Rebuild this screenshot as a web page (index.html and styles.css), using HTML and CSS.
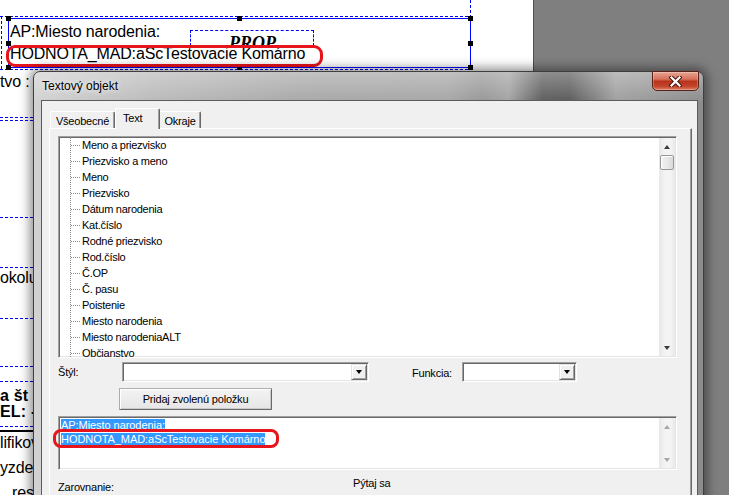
FILE: index.html
```html
<!DOCTYPE html>
<html lang="sk">
<head>
<meta charset="utf-8">
<title>Textový objekt</title>
<link rel="stylesheet" href="styles.css">
</head>
<body>
<div class="screen">
  <div class="canvas">
    <div class="dash-h top-rule"></div>
    <div class="dash-v top-vert"></div>
    <div class="dash-v left-vert"></div>
    <div class="selbox"></div>
    <div class="dash-h sel-under"></div>
    <div class="handle h-tl"></div>
    <div class="handle h-tm"></div>
    <div class="handle h-tr"></div>
    <div class="handle h-ml"></div>
    <div class="handle h-mr"></div>
    <div class="handle h-bl"></div>
    <div class="handle h-bm"></div>
    <div class="handle h-br"></div>
    <div class="prop"><span class="prop-text">PROP</span></div>
    <div class="cv-text t-ap">AP:Miesto narodenia:</div>
    <div class="cv-text t-hod">HODNOTA_MAD:aScTestovacie Komárno</div>
    <div class="ring ring-canvas"></div>

    <div class="cv-text t-tvo">tvo :</div>
    <div class="dash-h side d117"></div>
    <div class="dash-h side d120"></div>
    <div class="dash-h side d217"></div>
    <div class="dash-h side d267"></div>
    <div class="cv-text t-okolu">okolu</div>
    <div class="dash-h side d318"></div>
    <div class="dash-h side d366"></div>
    <div class="dash-h side d381"></div>
    <div class="cv-text bold t-ast">a št</div>
    <div class="cv-text bold t-el">EL: -</div>
    <div class="dash-h side d426"></div>
    <div class="solid-rule"></div>
    <div class="cv-text t-lif">lifikov</div>
    <div class="cv-text t-yz">yzdel</div>
    <div class="cv-text t-reso">reso</div>
  </div>
  <div class="backdrop"></div>

  <div class="dialog">
    <div class="titlebar">
      <span class="title">Textový objekt</span>
      <div class="close">
        <svg width="13" height="11" viewBox="0 0 13 11">
          <path d="M2.5 1.5 L10.5 9.5 M10.5 1.5 L2.5 9.5" stroke="#4b1710" stroke-width="4.2" stroke-linecap="square" fill="none"/>
          <path d="M2.5 1.5 L10.5 9.5 M10.5 1.5 L2.5 9.5" stroke="#ffffff" stroke-width="2.2" stroke-linecap="square" fill="none"/>
        </svg>
      </div>
    </div>
    <div class="client">
      <div class="tabs">
        <div class="tab tab-gen">Všeobecné</div>
        <div class="tab tab-text active">Text</div>
        <div class="tab tab-okr">Okraje</div>
      </div>
      <div class="panel">
        <div class="treebox sunken">
          <ul class="tree">
            <li>Meno a priezvisko</li>
            <li>Priezvisko a meno</li>
            <li>Meno</li>
            <li>Priezvisko</li>
            <li>Dátum narodenia</li>
            <li>Kat.číslo</li>
            <li>Rodné priezvisko</li>
            <li>Rod.číslo</li>
            <li>Č.OP</li>
            <li>Č. pasu</li>
            <li>Poistenie</li>
            <li>Miesto narodenia</li>
            <li>Miesto narodeniaALT</li>
            <li>Občianstvo</li>
          </ul>
          <div class="vscroll">
            <div class="sb-btn"><span class="tri-up"></span></div>
            <div class="thumb"></div>
            <div class="sb-track"></div>
            <div class="sb-btn"><span class="tri-down"></span></div>
          </div>
        </div>

        <div class="combo-row">
          <span class="lbl lbl-styl">Štýl:</span>
          <div class="combo sunken combo-styl"><div class="drop"><span class="tri-down black"></span></div></div>
          <span class="lbl lbl-fn">Funkcia:</span>
          <div class="combo sunken combo-fn"><div class="drop"><span class="tri-down black"></span></div></div>
        </div>

        <div class="btn-row">
          <button class="btn" type="button">Pridaj zvolenú položku</button>
        </div>

        <div class="memo sunken">
          <div class="memo-text">
            <div class="mline"><span class="hl">AP:Miesto narodenia:</span></div>
            <div class="mline"><span class="hl">HODNOTA_MAD:aScTestovacie Komárno</span></div>
          </div>
          <div class="vscroll disabled">
            <div class="sb-btn"><span class="tri-up"></span></div>
            <div class="sb-track"></div>
            <div class="sb-btn"><span class="tri-down"></span></div>
          </div>
          <div class="ring ring-memo"></div>
        </div>

        <div class="bottom-row">
          <span class="lbl lbl-zar">Zarovnanie:</span>
          <span class="lbl lbl-pyt">Pýtaj sa</span>
        </div>
      </div>
    </div>
  </div>
</div>
</body>
</html>
```

FILE: styles.css
```css
* { box-sizing: border-box; }
html, body { margin: 0; padding: 0; }
body {
  width: 729px;
  height: 495px;
  overflow: hidden;
  background: #7f7f7f;
  font-family: "Liberation Sans", Arial, sans-serif;
  color: #000;
}
.screen {
  position: relative;
  display: flex;
  width: 729px;
  height: 495px;
  overflow: hidden;
}

/* ---------- design canvas ---------- */
.canvas {
  position: relative;
  flex: none;
  width: 533px;
  height: 495px;
  background: #fff;
  overflow: hidden;
}
.backdrop {
  flex: 1;
  background: #7f7f7f;
  border-left: 1px solid #4f4f4f;
}
.dash-h {
  position: absolute;
  height: 1px;
  background: repeating-linear-gradient(to right, #0000ff 0 3px, transparent 3px 5px);
}
.dash-v {
  position: absolute;
  width: 1px;
  background: repeating-linear-gradient(to bottom, #0000ff 0 3px, transparent 3px 5px);
}
.top-rule { top: 16px; left: 0; width: 471px; }
.top-vert { top: 0; left: 470px; height: 16px; }
.left-vert { top: 16px; left: 1px; height: 54px; }
.sel-under { top: 69px; left: 0; width: 471px; }
.selbox {
  position: absolute;
  left: 8px;
  top: 18px;
  width: 463px;
  height: 50px;
  border: 1px solid #0000ff;
}
.handle {
  position: absolute;
  width: 5px;
  height: 5px;
  background: #000;
}
.h-tl { left: 6px; top: 16px; }
.h-tm { left: 237px; top: 16px; }
.h-tr { left: 468px; top: 16px; }
.h-ml { left: 6px; top: 41px; }
.h-mr { left: 468px; top: 41px; }
.h-bl { left: 6px; top: 65px; }
.h-bm { left: 237px; top: 65px; }
.h-br { left: 468px; top: 65px; }

.prop {
  position: absolute;
  left: 190px;
  top: 30px;
  width: 124px;
  height: 16px;
  border: 1px dashed #0000ff;
  border-bottom: none;
  overflow: hidden;
  padding: 3px 0 0 38px;
}
.prop-text {
  display: block;
  font-family: "Liberation Serif", "Times New Roman", serif;
  font-weight: bold;
  font-style: italic;
  font-size: 18px;
  line-height: 18px;
  color: #000;
}
.cv-text {
  position: absolute;
  font-size: 16px;
  line-height: 18px;
  letter-spacing: -0.15px;
  white-space: nowrap;
  color: #000;
}
.cv-text.bold {
  font-weight: bold;
  font-size: 16px;
  line-height: 16px;
  letter-spacing: 0.2px;
}
.t-ap { left: 10px; top: 23px; }
.t-hod { left: 10px; top: 45px; }
.t-tvo { left: 0; top: 73px; }
.t-okolu { left: 0; top: 269px; }
.t-ast { left: 0; top: 388px; }
.t-el { left: 0; top: 404px; }
.t-lif { left: 0; top: 434px; }
.t-yz { left: 0; top: 459px; }
.t-reso { left: 12px; top: 484px; }
.side { left: 0; width: 60px; }
.d117 { top: 117px; }
.d120 { top: 120px; }
.d217 { top: 217px; }
.d267 { top: 267px; }
.d318 { top: 318px; }
.d366 { top: 366px; }
.d381 { top: 381px; }
.d426 { top: 426px; }
.solid-rule {
  position: absolute;
  left: 0;
  top: 430px;
  width: 60px;
  height: 2px;
  background: #000;
}

.ring {
  position: absolute;
  border: 3px solid #e8141c;
  border-radius: 9px;
}
.ring-canvas { left: 6px; top: 45px; width: 317px; height: 22px; }

/* ---------- dialog window ---------- */
.dialog {
  position: absolute;
  left: 33px;
  top: 71px;
  width: 671px;
  height: 440px;
  border: 1px solid #3e3e3e;
  border-radius: 7px 7px 0 0;
  background:
    linear-gradient(to bottom, rgba(255,255,255,0.3), rgba(255,255,255,0) 30px),
    linear-gradient(to right, #d2d2d2 0%, #bababa 18%, #a8a8a8 40%, #a6a6a6 62%, #989898 67%, #a3a3a3 71%, #5e5e5e 76%, #5c5c5c 80%, #a0a0a0 87%, #8c8c8c 100%);
  box-shadow: 0 0 11px 3px rgba(0,0,0,0.45);
  padding: 0 5px 0 7px;
  display: flex;
  flex-direction: column;
}
.titlebar {
  height: 28px;
  flex: none;
  display: flex;
  align-items: center;
  justify-content: space-between;
}
.title {
  padding-left: 1px;
  font-size: 12px;
  color: #000;
  text-shadow: 0 0 5px rgba(255,255,255,0.85), 0 0 9px rgba(255,255,255,0.6);
}
.close {
  align-self: flex-start;
  margin-top: -1px;
  margin-right: -1px;
  width: 47px;
  height: 20px;
  border: 1px solid #5a2118;
  border-radius: 0 0 5px 5px;
  background: linear-gradient(to bottom, #e7a696 0%, #d6705a 40%, #b8321b 52%, #c4452b 80%, #dc8266 100%);
  box-shadow: inset 0 0 0 1px rgba(255,255,255,0.25);
  display: flex;
  align-items: center;
  justify-content: center;
}
.close svg { display: block; }

.client {
  flex: 1;
  background: #f0f0f0;
  border: 1px solid #5c5c5c;
  border-bottom: none;
  padding: 7px 5px 0 7px;
  display: flex;
  flex-direction: column;
  font-size: 11px;
  letter-spacing: -0.2px;
}
.tabs {
  height: 20px;
  flex: none;
  display: flex;
  align-items: flex-end;
  padding-left: 1px;
}
.tab {
  height: 17px;
  background: #f0f0f0;
  border: 1px solid;
  border-color: #fff #696969 transparent #fff;
  border-bottom: none;
  border-radius: 2px 2px 0 0;
  box-shadow: inset -1px 0 0 #a0a0a0;
  display: flex;
  align-items: center;
  justify-content: center;
  padding-top: 1px;
}
.tab-gen { width: 65px; }
.tab-text { width: 45px; }
.tab-okr { width: 42px; margin-left: -1px; }
.tab.active {
  height: 21px;
  margin-bottom: -1px;
  position: relative;
  z-index: 1;
  justify-content: flex-start;
  padding: 0 0 2px 7px;
}
.panel {
  flex: 1;
  background: #f0f0f0;
  border-top: 1px solid #fff;
  border-left: 1px solid #fff;
  border-right: 1px solid #696969;
  box-shadow: inset -1px 0 0 #a0a0a0;
  padding: 7px 0 0 8px;
  display: flex;
  flex-direction: column;
}
.sunken {
  background: #fff;
  border: 1px solid;
  border-color: #a0a0a0 #fff #fff #a0a0a0;
  box-shadow: inset 1px 1px 0 #696969, inset -1px -1px 0 #e3e3e3;
  padding: 1px;
}
.treebox {
  width: 619px;
  height: 222px;
  flex: none;
  display: flex;
  overflow: hidden;
}
.tree {
  flex: 1;
  list-style: none;
  margin: -1px 0 0 10px;
  padding: 0;
  border-left: 1px dotted #8a8a8a;
  align-self: flex-start;
  min-height: 232px;
  letter-spacing: -0.27px;
}
.tree li {
  position: relative;
  height: 16px;
  line-height: 16px;
  padding-left: 11px;
  white-space: nowrap;
}
.tree li::before {
  content: "";
  position: absolute;
  left: 0;
  top: 8px;
  width: 9px;
  border-top: 1px dotted #8a8a8a;
}

.vscroll {
  width: 16px;
  flex: none;
  display: flex;
  flex-direction: column;
  background: linear-gradient(to right, #e8e8e8, #f4f4f4 40%, #f4f4f4 70%, #e9e9e9);
}
.sb-btn {
  height: 17px;
  flex: none;
  display: flex;
  align-items: center;
  justify-content: center;
}
.sb-track { flex: 1; }
.thumb {
  height: 15px;
  flex: none;
  margin: 0 1px;
  border: 1px solid #979797;
  border-radius: 2px;
  background: linear-gradient(to right, #f3f3f3, #e8e8e8 50%, #d9d9d9);
  box-shadow: inset 1px 1px 0 #fff;
}
.tri-up, .tri-down {
  width: 0;
  height: 0;
  border-left: 3.5px solid transparent;
  border-right: 3.5px solid transparent;
}
.tri-up { border-bottom: 4px solid #3c3c3c; }
.tri-down { border-top: 4px solid #3c3c3c; }
.disabled .tri-up { border-bottom-color: #a7a7a7; }
.disabled .tri-down { border-top-color: #a7a7a7; }
.tri-down.black { border-top-color: #000; }

.combo-row {
  margin-top: 4px;
  height: 20px;
  flex: none;
  display: flex;
  align-items: center;
}
.lbl { line-height: 16px; }
.lbl-styl { width: 64px; }
.lbl-fn { width: 50px; margin-left: 43px; padding-top: 2px; }
.combo {
  height: 20px;
  display: flex;
  justify-content: flex-end;
}
.combo-styl { width: 247px; }
.combo-fn { width: 115px; }
.drop {
  width: 16px;
  height: 16px;
  background: #f0f0f0;
  border: 1px solid;
  border-color: #e3e3e3 #696969 #696969 #e3e3e3;
  box-shadow: inset 1px 1px 0 #fff, inset -1px -1px 0 #a0a0a0;
  display: flex;
  align-items: center;
  justify-content: center;
}

.btn-row {
  margin-top: 6px;
  flex: none;
  display: flex;
}
.btn {
  margin: 0 0 0 61px;
  width: 153px;
  height: 22px;
  padding: 0;
  font-family: "Liberation Sans", Arial, sans-serif;
  font-size: 11px;
  letter-spacing: -0.2px;
  color: #000;
  background: linear-gradient(to bottom, #f3f3f3, #e6e6e6);
  border: 1px solid;
  border-color: #adadad #696969 #696969 #adadad;
  border-radius: 1px;
  box-shadow: inset 1px 1px 0 #fff, inset -1px -1px 0 #c9c9c9;
}

.memo {
  position: relative;
  margin-top: 6px;
  width: 619px;
  height: 54px;
  flex: none;
  display: flex;
}
.memo-text {
  flex: 1;
  padding-left: 1px;
  letter-spacing: -0.06px;
}
.mline {
  height: 14px;
  line-height: 14px;
  white-space: nowrap;
}
.hl {
  background: #3399ff;
  color: #fff;
}
.ring-memo {
  left: -6px;
  top: 12px;
  width: 226px;
  height: 19px;
  border-width: 3px;
  border-radius: 8px;
}

.bottom-row {
  margin-top: 5px;
  flex: none;
  display: flex;
  align-items: flex-start;
}
.lbl-zar { width: 295px; margin-top: 4px; }
```
